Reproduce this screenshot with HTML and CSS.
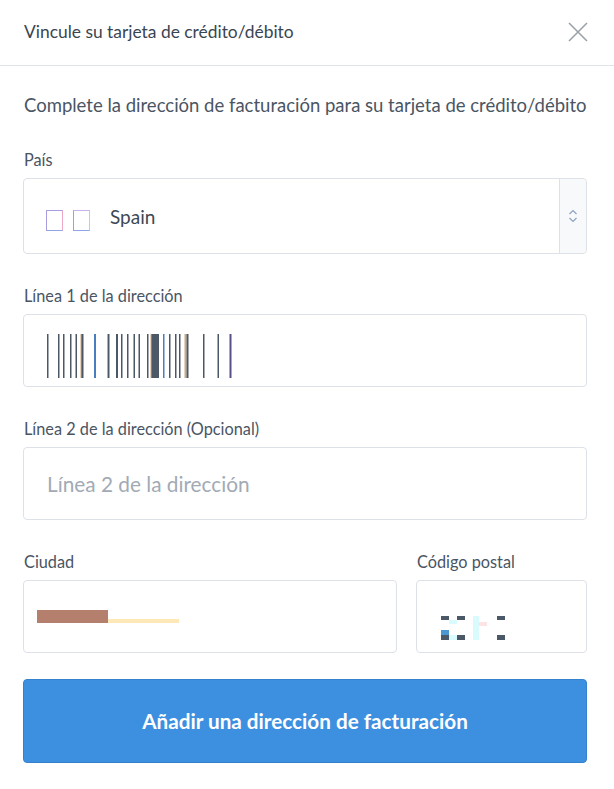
FILE: index.html
```html
<!DOCTYPE html>
<html lang="es">

<head>
  <meta charset="UTF-8">
  <title>Vincule su tarjeta</title>
  <link rel="stylesheet" href="styles.css">
</head>

<body>

  <div class="modal">
    <div class="modal-header">
      <h1>Vincule su tarjeta de crédito/débito</h1>
      <button class="close" aria-label="Cerrar">
        <svg width="20" height="20" viewBox="0 0 20 20">
          <path d="M1 1 L19 19 M19 1 L1 19" stroke="#9aa2ab" stroke-width="1.6" fill="none" />
        </svg>
      </button>
    </div>

    <div class="modal-body">
      <p class="intro">Complete la dirección de facturación para su tarjeta de crédito/débito</p>

      <div class="field">
        <label>País</label>
        <div class="select">
          <div class="select-value">
            <span class="flag"><span class="tofu"></span><span class="tofu"></span></span>
            <span>Spain</span>
          </div>
          <div class="select-arrows">
            <svg width="10" height="14" viewBox="0 0 10 14">
              <path d="M1.5 5 L5 1.5 L8.5 5 M1.5 9 L5 12.5 L8.5 9" stroke="#8fa3c0" stroke-width="1.2" fill="none" />
            </svg>
          </div>
        </div>
      </div>

      <div class="field">
        <label>Línea 1 de la dirección</label>
        <div class="input">
          <svg class="redacted" width="190" height="44" viewBox="0 0 190 44">
            <g fill="#c99a6b" opacity="0.85">
              <rect x="-1" y="0" width="1.5" height="44" />
              <rect x="33.5" y="0" width="1.5" height="44" />
              <rect x="60" y="0" width="1.5" height="44" />
              <rect x="103.5" y="0" width="1.5" height="44" />
              <rect x="137.5" y="0" width="2" height="44" />
            </g>
            <g fill="#4b5868">
              <rect x="0" y="0" width="1.5" height="44" />
              <rect x="11" y="0" width="1.5" height="44" />
              <rect x="16" y="0" width="1.5" height="44" />
              <rect x="23" y="0" width="1.5" height="44" />
              <rect x="28.5" y="0" width="1.5" height="44" />
              <rect x="34.5" y="0" width="2" height="44" />
              <rect x="47" y="0" width="2" height="44" fill="#4a7fbf" />
              <rect x="61" y="0" width="1.5" height="44" />
              <rect x="69" y="0" width="2" height="44" />
              <rect x="74" y="0" width="1.5" height="44" />
              <rect x="80" y="0" width="1.5" height="44" />
              <rect x="86.5" y="0" width="1.5" height="44" />
              <rect x="91.5" y="0" width="1.5" height="44" />
              <rect x="100" y="0" width="1.5" height="44" />
              <rect x="104.5" y="0" width="7.5" height="44" />
              <rect x="116" y="0" width="1.5" height="44" fill="#4a7fbf" />
              <rect x="122" y="0" width="1.5" height="44" />
              <rect x="128" y="0" width="1.5" height="44" />
              <rect x="132" y="0" width="1.5" height="44" />
              <rect x="139.5" y="0" width="2" height="44" />
              <rect x="156" y="0" width="1.5" height="44" />
              <rect x="170.5" y="0" width="1.5" height="44" />
              <rect x="182.5" y="0" width="2" height="44" fill="#5b4f8a" />
            </g>
          </svg>
        </div>
      </div>

      <div class="field">
        <label>Línea 2 de la dirección (Opcional)</label>
        <div class="input">
          <span class="placeholder">Línea 2 de la dirección</span>
        </div>
      </div>

      <div class="row">
        <div class="field city">
          <label>Ciudad</label>
          <div class="input">
            <span class="city-mask"><span class="mask-dark"></span><span class="mask-light"></span></span>
          </div>
        </div>
        <div class="field zip">
          <label>Código postal</label>
          <div class="input">
            <svg class="zip-mask" width="64" height="26" viewBox="0 0 64 26">
              <rect x="0" y="0" width="8" height="4" fill="#4b5868" />
              <rect x="8" y="4" width="8" height="4" fill="#d9fbfd" />
              <rect x="16" y="0" width="8" height="4" fill="#4b5868" />
              <rect x="32" y="0" width="6" height="24" fill="#d9fbfd" />
              <rect x="38" y="6" width="8" height="4" fill="#fde3e3" />
              <rect x="56" y="0" width="8" height="4" fill="#4b5868" />
              <rect x="0" y="14" width="8" height="5" fill="#4a97d2" />
              <rect x="0" y="19" width="8" height="5" fill="#4b5868" />
              <rect x="8" y="19" width="8" height="5" fill="#d9fbfd" />
              <rect x="16" y="19" width="8" height="5" fill="#4b5868" />
              <rect x="56" y="19" width="8" height="5" fill="#4b5868" />
            </svg>
          </div>
        </div>
      </div>

      <button class="submit">Añadir una dirección de facturación</button>
    </div>
  </div>

</body>

</html>
```

FILE: styles.css
```css
body {
  margin: 0;
  font-family: Lato, "Open Sans", sans-serif;
  color: #3d4855;
  background: #fff;
}

.modal {
  width: 614px;
  height: 789px;
  background: #fff;
}

.modal-header {
  height: 66px;
  padding: 0 26px 0 24px;
  display: flex;
  align-items: center;
  justify-content: space-between;
  border-bottom: 1px solid #dfe4ea;
  box-sizing: border-box;
}

.modal-header h1 {
  margin: 0 0 2px;
  font-size: 17.4px;
  font-weight: 400;
  color: #3a4552;
}

.close {
  background: none;
  border: none;
  padding: 0;
  width: 20px;
  height: 20px;
  margin-bottom: 2px;
}

.modal-body {
  padding: 27px 27px 0 23px;
}

.intro {
  margin: 0 0 0 1px;
  font-size: 18.5px;
  line-height: 24px;
  color: #4a5563;
  white-space: nowrap;
}

.field label {
  display: block;
  font-size: 16.3px;
  line-height: 18px;
  color: #4a5563;
  margin: 0 0 9px 1px;
}

.field {
  margin-top: 34px;
}

.field + .field {
  margin-top: 33px;
}

.select {
  height: 76px;
  border: 1px solid #dde2e9;
  border-radius: 4px;
  display: flex;
  box-sizing: border-box;
}

.select-value {
  flex: 1;
  display: flex;
  align-items: center;
  padding-left: 22px;
  font-size: 19px;
  color: #3d4855;
}

.flag {
  display: flex;
  gap: 10px;
  margin-right: 20px;
  margin-top: 8px;
}

.tofu {
  width: 17px;
  height: 21px;
  box-sizing: border-box;
  border: 1px solid #a99be0;
  border-right-color: #f0a8c8;
  border-bottom-color: #8fa5e6;
}

.tofu + .tofu {
  border-left-color: #8fa5e6;
  border-right-color: #8fe0f0;
  border-top-color: #c7b3ea;
}

.select-arrows {
  width: 26px;
  border-left: 1px solid #dde2e9;
  background: #f8f9fb;
  border-radius: 0 4px 4px 0;
  display: flex;
  align-items: center;
  justify-content: center;
}

.input {
  height: 73px;
  border: 1px solid #dde2e9;
  border-radius: 4px;
  display: flex;
  align-items: center;
  padding-left: 23px;
  box-sizing: border-box;
}

.redacted {
  margin-top: 10px;
}

.placeholder {
  font-size: 20.8px;
  color: #a2aab4;
}

.row {
  display: flex;
  gap: 19px;
  margin-top: 33px;
}

.row .field {
  margin-top: 0;
}

.city {
  flex: 1;
}

.zip {
  width: 171px;
}

.city .input {
  padding-left: 13px;
}

.city-mask {
  display: flex;
  align-items: flex-end;
}

.mask-dark {
  width: 71px;
  height: 13px;
  background: #b57f6e;
}

.mask-light {
  width: 71px;
  height: 4px;
  background: #fde9b7;
}

.zip .input {
  padding-left: 24px;
  align-items: flex-start;
  padding-top: 35px;
}

.submit {
  display: block;
  width: 100%;
  height: 84px;
  margin-top: 26px;
  background: #3d8fe0;
  border: 1px solid #3582cc;
  border-radius: 4px;
  color: #fff;
  font-family: Lato, sans-serif;
  font-size: 20.7px;
  font-weight: 700;
  cursor: pointer;
}
```
